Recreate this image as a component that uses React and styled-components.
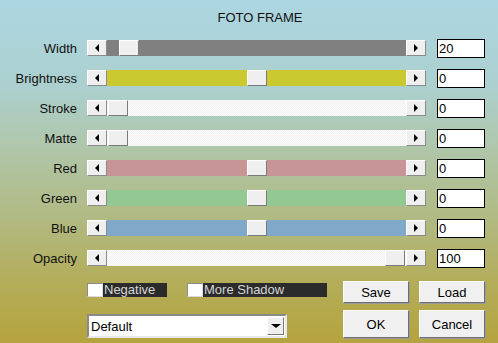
import React from "react";
import styled, { createGlobalStyle } from "styled-components";

const sliders = [
  { label: "Width", track: "#808080", thumb: 12, value: "20" },
  { label: "Brightness", track: "#cbc930", thumb: 140, value: "0" },
  { label: "Stroke", track: "white", thumb: 1, value: "0" },
  { label: "Matte", track: "white", thumb: 1, value: "0" },
  { label: "Red", track: "#c89597", thumb: 140, value: "0" },
  { label: "Green", track: "#94c893", thumb: 140, value: "0" },
  { label: "Blue", track: "#80a8c8", thumb: 140, value: "0" },
  { label: "Opacity", track: "white", thumb: 278, value: "100" },
];

const App = () => {
  return (
    <>
      <GlobalStyle />
      <Dialog>
        <Title>FOTO FRAME</Title>
        <Rows>
          {sliders.map((s) => (
            <Row key={s.label}>
              <Label>{s.label}</Label>
              <ScrollBar>
                <ArrowButton>
                  <Triangle $dir="left" />
                </ArrowButton>
                <Track $color={s.track}>
                  <Thumb style={{ left: s.thumb }} />
                </Track>
                <ArrowButton>
                  <Triangle $dir="right" />
                </ArrowButton>
              </ScrollBar>
              <ValueBox>{s.value}</ValueBox>
            </Row>
          ))}
        </Rows>
        <Bottom>
          <LeftColumn>
            <CheckRow>
              <CheckItem>
                <CheckBox />
                <CheckLabel $width={64}>Negative</CheckLabel>
              </CheckItem>
              <CheckItem>
                <CheckBox />
                <CheckLabel $width={124}>More Shadow</CheckLabel>
              </CheckItem>
            </CheckRow>
            <Select>
              <SelectText>Default</SelectText>
              <SelectButton>
                <Triangle $dir="down" />
              </SelectButton>
            </Select>
          </LeftColumn>
          <ButtonGrid>
            <Button>Save</Button>
            <Button>Load</Button>
            <Button>OK</Button>
            <Button>Cancel</Button>
          </ButtonGrid>
        </Bottom>
      </Dialog>
    </>
  );
};

const GlobalStyle = createGlobalStyle`
  body {
    margin: 0;
    font-family: "Liberation Sans", Arial, sans-serif;
  }
`;

const Dialog = styled.div`
  width: 498px;
  height: 343px;
  overflow: hidden;
  font-size: 13px;
  color: #111;
  background: linear-gradient(
    to bottom,
    #acd6e1 0%,
    #acd0cf 25%,
    #afc5a6 45%,
    #b1b980 65%,
    #b3ad5a 82%,
    #b5a43e 100%
  );
`;

const Title = styled.div`
  box-sizing: border-box;
  height: 33px;
  padding: 10px 0 0 22px;
  line-height: 16px;
  text-align: center;
`;

const Rows = styled.div`
  display: flex;
  flex-direction: column;
`;

const Row = styled.div`
  display: flex;
  align-items: center;
  height: 30px;
`;

const Label = styled.div`
  width: 77px;
  margin-right: 10px;
  text-align: right;
`;

const ScrollBar = styled.div`
  display: flex;
  width: 339px;
  height: 16px;
`;

const ArrowButton = styled.div`
  box-sizing: border-box;
  width: 20px;
  height: 16px;
  display: flex;
  align-items: center;
  justify-content: center;
  background: #efefef;
  border-top: 1px solid #ffffff;
  border-left: 1px solid #ffffff;
  border-right: 1px solid #8a8a8a;
  border-bottom: 1px solid #8a8a8a;
`;

const Triangle = styled.span`
  width: 0;
  height: 0;
  border-style: solid;
  border-color: transparent;
  ${({ $dir }) =>
    $dir === "left"
      ? "border-width: 4px 4px 4px 0; border-right-color: #000;"
      : $dir === "right"
      ? "border-width: 4px 0 4px 4px; border-left-color: #000;"
      : "border-width: 4px 5px 0 5px; border-top-color: #000;"}
`;

const Track = styled.div`
  position: relative;
  flex: 1;
  background: ${({ $color }) =>
    $color === "white"
      ? "repeating-conic-gradient(#f1f1f1 0 25%, #fcfcfc 0 50%) 0 0 / 2px 2px"
      : $color};
`;

const Thumb = styled.div`
  position: absolute;
  top: 0;
  box-sizing: border-box;
  width: 20px;
  height: 16px;
  background: #efefef;
  border-top: 1px solid #ffffff;
  border-left: 1px solid #ffffff;
  border-right: 1px solid #7a7a7a;
  border-bottom: 1px solid #7a7a7a;
`;

const ValueBox = styled.div`
  box-sizing: border-box;
  width: 48px;
  height: 19px;
  margin-left: 11px;
  padding-left: 1px;
  background: #fff;
  border: 1px solid #000;
  line-height: 17px;
  color: #000;
`;

const Bottom = styled.div`
  display: flex;
  padding-left: 87px;
`;

const LeftColumn = styled.div`
  width: 256px;
  display: flex;
  flex-direction: column;
`;

const CheckRow = styled.div`
  display: flex;
  gap: 20px;
  margin-top: 10px;
  height: 14px;
`;

const CheckItem = styled.div`
  display: flex;
  align-items: center;
`;

const CheckBox = styled.div`
  box-sizing: border-box;
  width: 16px;
  height: 14px;
  background: #fff;
  border-top: 1px solid #8c8c8c;
  border-left: 1px solid #8c8c8c;
  border-right: 1px solid #dcdcdc;
  border-bottom: 1px solid #dcdcdc;
`;

const CheckLabel = styled.div`
  width: ${({ $width }) => $width}px;
  height: 14px;
  padding-left: 1px;
  line-height: 14px;
  background: #2b2b2b;
  color: #d6d6d6;
  box-sizing: border-box;
`;

const Select = styled.div`
  box-sizing: border-box;
  display: flex;
  align-items: center;
  width: 200px;
  height: 24px;
  margin-top: 17px;
  background: #fff;
  border-top: 2px solid #8a8a8a;
  border-left: 2px solid #8a8a8a;
  border-right: 2px solid #e8e8e8;
  border-bottom: 2px solid #e8e8e8;
`;

const SelectText = styled.div`
  flex: 1;
  padding-left: 2px;
  color: #000;
`;

const SelectButton = styled.div`
  box-sizing: border-box;
  width: 17px;
  height: 18px;
  margin-right: 1px;
  display: flex;
  align-items: center;
  justify-content: center;
  background: #efefef;
  border-top: 1px solid #fff;
  border-left: 1px solid #fff;
  border-right: 1px solid #7a7a7a;
  border-bottom: 1px solid #7a7a7a;
`;

const ButtonGrid = styled.div`
  display: grid;
  grid-template-columns: 66px 66px;
  grid-template-rows: 22px 28px;
  column-gap: 10px;
  row-gap: 7px;
  margin-top: 8px;
`;

const Button = styled.div`
  box-sizing: border-box;
  display: flex;
  align-items: center;
  justify-content: center;
  background: #f0f0f0;
  color: #000;
  border-top: 1px solid #ffffff;
  border-left: 1px solid #ffffff;
  border-right: 1px solid #6e6e6e;
  border-bottom: 1px solid #6e6e6e;
  box-shadow: 1px 1px 0 #9a9a9a;
`;

export default App;
